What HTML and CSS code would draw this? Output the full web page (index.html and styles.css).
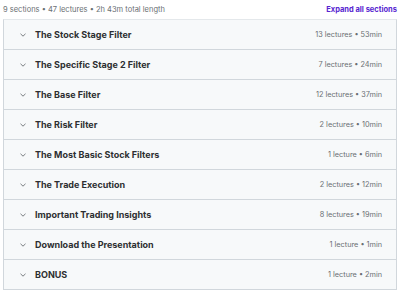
FILE: index.html
```html
<!DOCTYPE html>
<html lang="en">

<head>
    <meta charset="UTF-8">
    <meta name="viewport" content="width=device-width, initial-scale=1">
    <title>Course content</title>
    <link rel="stylesheet" href="styles.css">
</head>

<body>

    <div class="curriculum">
        <div class="summary">
            <span>9 sections • 47 lectures • 2h 43m total length</span>
            <button class="expand">Expand all sections</button>
        </div>

        <div class="sections">
            <div class="section">
                <span class="chevron"><svg viewBox="0 0 6 4"><path d="M0.5 0.8 3 3.2 5.5 0.8"/></svg></span>
                <span class="title">The Stock Stage Filter</span>
                <span class="meta">13 lectures • 53min</span>
            </div>
            <div class="section">
                <span class="chevron"><svg viewBox="0 0 6 4"><path d="M0.5 0.8 3 3.2 5.5 0.8"/></svg></span>
                <span class="title">The Specific Stage 2 Filter</span>
                <span class="meta">7 lectures • 24min</span>
            </div>
            <div class="section">
                <span class="chevron"><svg viewBox="0 0 6 4"><path d="M0.5 0.8 3 3.2 5.5 0.8"/></svg></span>
                <span class="title">The Base Filter</span>
                <span class="meta">12 lectures • 37min</span>
            </div>
            <div class="section">
                <span class="chevron"><svg viewBox="0 0 6 4"><path d="M0.5 0.8 3 3.2 5.5 0.8"/></svg></span>
                <span class="title">The Risk Filter</span>
                <span class="meta">2 lectures • 10min</span>
            </div>
            <div class="section">
                <span class="chevron"><svg viewBox="0 0 6 4"><path d="M0.5 0.8 3 3.2 5.5 0.8"/></svg></span>
                <span class="title">The Most Basic Stock Filters</span>
                <span class="meta">1 lecture • 6min</span>
            </div>
            <div class="section">
                <span class="chevron"><svg viewBox="0 0 6 4"><path d="M0.5 0.8 3 3.2 5.5 0.8"/></svg></span>
                <span class="title">The Trade Execution</span>
                <span class="meta">2 lectures • 12min</span>
            </div>
            <div class="section">
                <span class="chevron"><svg viewBox="0 0 6 4"><path d="M0.5 0.8 3 3.2 5.5 0.8"/></svg></span>
                <span class="title">Important Trading Insights</span>
                <span class="meta">8 lectures • 19min</span>
            </div>
            <div class="section">
                <span class="chevron"><svg viewBox="0 0 6 4"><path d="M0.5 0.8 3 3.2 5.5 0.8"/></svg></span>
                <span class="title">Download the Presentation</span>
                <span class="meta">1 lecture • 1min</span>
            </div>
            <div class="section">
                <span class="chevron"><svg viewBox="0 0 6 4"><path d="M0.5 0.8 3 3.2 5.5 0.8"/></svg></span>
                <span class="title">BONUS</span>
                <span class="meta">1 lecture • 2min</span>
            </div>
        </div>
    </div>

</body>

</html>
```

FILE: styles.css
```css
:root {
    --text: #2d2f31;
    --muted: #6a6f73;
    --purple: #5624d0;
    --panel: #f7f9fa;
    --border: #d1d7dc;
}

body {
    margin: 0;
    padding: 0;
    font-family: Inter, "Noto Sans", sans-serif;
    color: var(--text);
    background-color: #ffffff;
}

.curriculum {
    padding: 0 3px;
}

.summary {
    display: flex;
    align-items: center;
    justify-content: space-between;
    height: 19px;
    font-size: 7.5px;
    color: var(--muted);
}

.expand {
    border: none;
    background: none;
    padding: 0;
    font-family: inherit;
    font-size: 7.5px;
    font-weight: 700;
    color: var(--purple);
    cursor: pointer;
}

.sections {
    border: 1px solid var(--border);
    border-top-color: #e4e8eb;
}

.section {
    display: flex;
    align-items: center;
    height: 29px;
    padding: 0 14px 0 16px;
    background-color: var(--panel);
    border-top: 1px solid var(--border);
}

.section:first-child {
    border-top: none;
}

.chevron {
    display: flex;
    width: 6px;
    height: 4px;
    margin-right: 9px;
}

.chevron svg {
    width: 6px;
    height: 4px;
    fill: none;
    stroke: var(--muted);
    stroke-width: 0.9;
}

.title {
    flex: 1;
    font-size: 9px;
    font-weight: 700;
}

.meta {
    font-size: 7.3px;
    color: var(--muted);
}
```
